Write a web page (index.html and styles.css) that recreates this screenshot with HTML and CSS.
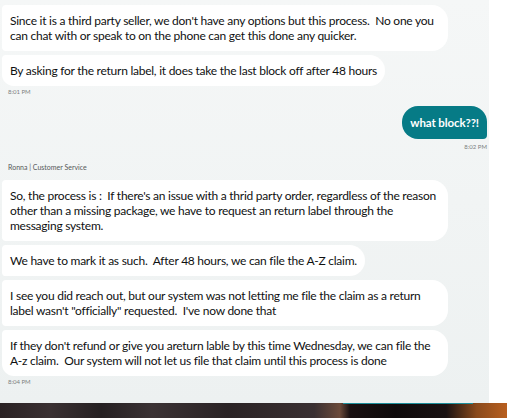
FILE: index.html
```html
<!DOCTYPE html>
<html>
<head>
<meta charset="utf-8">
<link rel="stylesheet" href="styles.css">
</head>
<body>
<div class="screen">
  <div class="chat">
    <div class="group agent">
      <div class="bubble multi">Since it is a third party seller, we don't have any options but this process.&nbsp; No one you<br>can chat with or speak to on the phone can get this done any quicker.</div>
      <div class="bubble last">By asking for the return label, it does take the last block off after 48 hours</div>
      <div class="time">8:01 PM</div>
    </div>
    <div class="group me">
      <div class="bubble mine">what block??!</div>
      <div class="time">8:02 PM</div>
    </div>
    <div class="group agent">
      <div class="sender">Ronna | Customer Service</div>
      <div class="bubble multi">So, the process is :&nbsp; If there's an issue with a thrid party order, regardless of the reason<br>other than a missing package, we have to request an return label through the<br>messaging system.</div>
      <div class="bubble">We have to mark it as such.&nbsp; After 48 hours, we can file the A-Z claim.</div>
      <div class="bubble multi">I see you did reach out, but our system was not letting me file the claim as a return<br>label wasn't "officially" requested.&nbsp; I've now done that</div>
      <div class="bubble multi last">If they don't refund or give you areturn lable by this time Wednesday, we can file the<br>A-z claim.&nbsp; Our system will not let us file that claim until this process is done</div>
      <div class="time">8:04 PM</div>
    </div>
  </div>
  <div class="side"></div>
</div>
<div class="photo"><div class="tealbar"></div></div>
</body>
</html>
```

FILE: styles.css
```css
html, body {
  margin: 0;
  padding: 0;
  width: 507px;
  height: 418px;
  overflow: hidden;
  background: #ffffff;
  font-family: "Lato", "Noto Sans", sans-serif;
  color: #0f1111;
}

.screen {
  display: flex;
  height: 403px;
}

.chat {
  width: 489px;
  height: 403px;
  box-sizing: border-box;
  padding: 5px 0 0 2px;
  background: linear-gradient(180deg, #f5f7f7 0%, #f1f4f4 50%, #edf1f1 100%);
  display: flex;
  flex-direction: column;
  overflow: hidden;
}

.side {
  flex: 1;
  background: #ffffff;
}

.group {
  display: flex;
  flex-direction: column;
  gap: 4px;
}

.group.agent {
  align-items: flex-start;
}

.group.me {
  align-items: flex-end;
  margin-top: 10px;
  padding-right: 2px;
}

.group.me + .group.agent {
  margin-top: 11px;
}

.bubble {
  background: #ffffff;
  font-size: 12px;
  letter-spacing: -0.25px;
  line-height: 15px;
  padding: 8px 8px;
  border-radius: 4px 16px 16px 4px;
  max-width: 446px;
  box-sizing: border-box;
  white-space: nowrap;
}

.bubble.multi {
  width: 446px;
}

.bubble.last {
  border-bottom-left-radius: 12px;
}

.bubble.mine {
  background: #067b86;
  color: #ffffff;
  font-weight: 700;
  font-size: 11.5px;
  letter-spacing: -0.1px;
  padding: 9px 8px;
  border-radius: 16px 16px 4px 16px;
}

.time {
  font-size: 6px;
  line-height: 8px;
  color: #7b8080;
  margin: -2px 0 0 6px;
}

.me .time {
  margin: 0;
}

.sender {
  font-size: 7px;
  line-height: 10px;
  color: #565959;
  margin: 0 0 4px 6px;
}

.photo {
  position: relative;
  height: 15px;
  background: linear-gradient(90deg, #2a2224 0%, #3a3032 10%, #252022 20%, #3b3234 30%, #2a2325 45%, #3a3032 62%, #6b4a3a 67%, #1a1112 69%, #0e0a0b 78%, #1a1213 88%, #8a4a1c 94%, #b85f1f 100%);
}

.tealbar {
  position: absolute;
  left: 343px;
  top: 0;
  width: 130px;
  height: 1px;
  background: #1c8e9a;
}
```
